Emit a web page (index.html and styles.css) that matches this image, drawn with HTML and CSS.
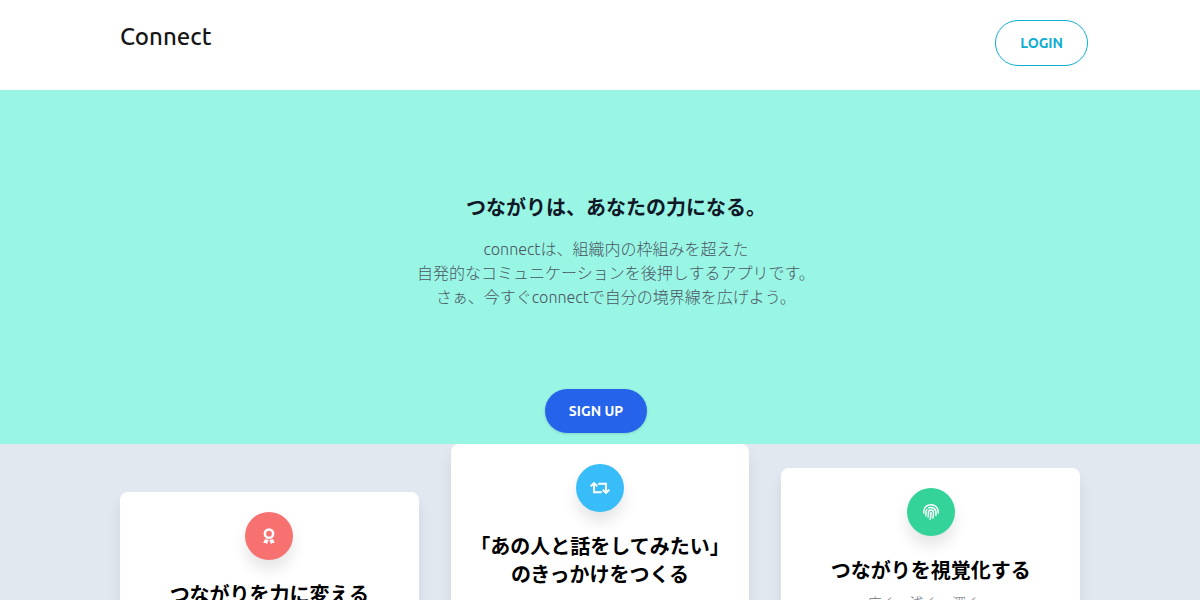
FILE: index.html
```html
<!DOCTYPE html>
<html lang="ja">
<head>
<meta charset="utf-8">
<meta name="viewport" content="width=device-width, initial-scale=1">
<title>Connect</title>
<link rel="stylesheet" href="styles.css">
</head>
<body>
<header class="header">
  <div class="container header-row">
    <a class="brand" href="#">Connect</a>
    <a class="button button-outline" href="#login">LOGIN</a>
  </div>
</header>
<main>
  <section class="hero">
    <div class="hero-copy">
      <h1 class="hero-title">つながりは、あなたの力になる。</h1>
      <p class="hero-text">connectは、組織内の枠組みを超えた<br>自発的なコミュニケーションを後押しするアプリです。<br>さぁ、今すぐconnectで自分の境界線を広げよう。</p>
    </div>
    <a class="button button-primary" href="#signup">SIGN UP</a>
  </section>
  <section class="features">
    <div class="container cards">
      <article class="card card-low">
        <div class="badge badge-red">
          <svg class="icon" viewBox="0 0 384 512" fill="none" stroke="currentColor" aria-hidden="true"><circle cx="192" cy="180" r="132" stroke-width="82"/><path d="M64 352L8 480l70-4 50 36 54-132zM320 352l56 128-70-4-50 36-54-132z" fill="currentColor" stroke="none"/></svg>
        </div>
        <h2 class="card-title">つながりを力に変える</h2>
      </article>
      <article class="card">
        <div class="badge badge-blue">
          <svg class="icon" viewBox="0 0 640 512" fill="none" stroke="currentColor" stroke-width="64" aria-hidden="true"><path d="M24 202L128 98l104 104M128 110v284h250M616 310L512 414 408 310M512 402V118H262"/></svg>
        </div>
        <h2 class="card-title">「あの人と話をしてみたい」<br>のきっかけをつくる</h2>
        <p class="card-text">話してみたい人との機会を</p>
      </article>
      <article class="card card-mid">
        <div class="badge badge-green">
          <svg class="icon" viewBox="0 0 512 512" fill="none" stroke="currentColor" stroke-width="48" stroke-linecap="round" aria-hidden="true"><path d="M228 488c20-72 29-145 28-218M162 413c10-49 15-98 14-148 0-40 35-77 79-77s80 36 81 81c1 60-6 120-20 180M88 370c8-40 9-72 8-105 0-35 10-62 28-86M180 126c100-48 235 14 236 141 1 32-1 64-4 98M24 285c1-20-1-40 3-66C50 90 150 24 254 24c130 0 234 100 234 235v26"/></svg>
        </div>
        <h2 class="card-title">つながりを視覚化する</h2>
        <p class="card-text">広く、浅く、深く。</p>
      </article>
    </div>
  </section>
</main>
</body>
</html>
```
FILE: styles.css
```css
* { box-sizing: border-box; }
body {
  margin: 0;
  color: #1a202c;
  background: #fff;
  font: 16px/24px Ubuntu, "Noto Sans", "Noto Sans CJK JP", sans-serif;
}
h1, h2, p { margin: 0; }
a { text-decoration: none; }
.container { max-width: 960px; margin: 0 auto; }
.header { padding: 20px 0 24px; }
.header-row { display: flex; justify-content: space-between; align-items: flex-start; }
.brand { color: #161616; font-size: 24px; line-height: 34px; font-weight: 500; }
.button {
  display: inline-block;
  padding: 12px 24px;
  border-radius: 24px;
  font-size: 14px;
  line-height: 20px;
  font-weight: 600;
}
.button-outline { margin-right: -8px; border: 1px solid #0cadcf; color: #0cadcf; }
.button-primary {
  margin-right: 8px;
  background: #2563eb;
  color: #fff;
  box-shadow: 0 1px 3px rgba(0, 0, 0, .15);
}
.hero {
  display: flex;
  flex-direction: column;
  align-items: center;
  padding: 100px 0 11px;
  background: #99f6e4;
}
.hero-copy { padding: 0 0 80px 32px; text-align: center; }
.hero-title { margin-bottom: 11px; color: #111827; font-size: 20px; line-height: 36px; font-weight: 700; }
.hero-text { color: #4b5563; font-weight: 300; }
.features { background: #e2e8f0; padding-bottom: 48px; }
.cards { display: grid; grid-template-columns: repeat(3, 1fr); gap: 32px; align-items: start; }
.card {
  padding: 20px 16px;
  border-radius: 8px;
  background: #fff;
  text-align: center;
  box-shadow: 0 10px 15px rgba(0, 0, 0, .08);
}
.card-mid { margin-top: 24px; }
.card-low { margin-top: 48px; }
.badge {
  display: flex;
  align-items: center;
  justify-content: center;
  width: 48px;
  height: 48px;
  margin: 0 auto 21px;
  border-radius: 50%;
  color: #fff;
  box-shadow: 0 10px 15px rgba(0, 0, 0, .1);
}
.badge-red { background: #f87171; }
.badge-blue { background: #38bdf8; }
.badge-green { background: #34d399; }
.icon { height: 16px; }
.card-title { color: #000; font-size: 20px; line-height: 28px; font-weight: 700; white-space: nowrap; }
.card-text { margin-top: 8px; color: #6b7280; font-size: 14px; line-height: 20px; font-weight: 300; }
```
